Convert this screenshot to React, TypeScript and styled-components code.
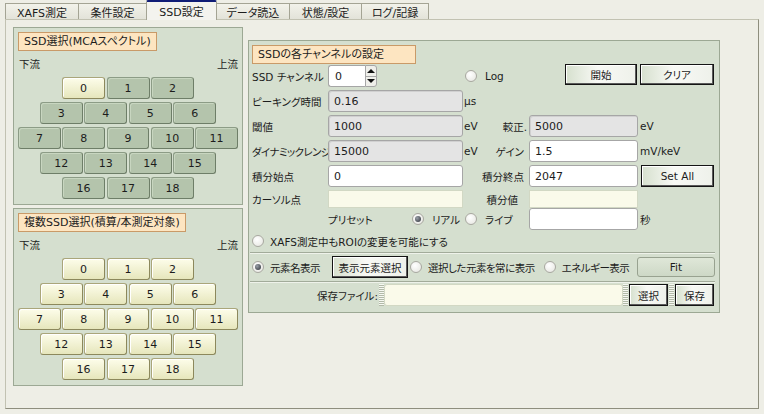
import React from "react";
import styled, { createGlobalStyle, css } from "styled-components";

const GlobalStyle = createGlobalStyle`
  html, body { margin: 0; padding: 0; background: #eeeee6; }
  body {
    font-family: "DejaVu Sans", "Noto Sans CJK JP", sans-serif;
    font-size: 10.5px;
    color: #1c1c1c;
    font-feature-settings: "palt";
  }
  * { box-sizing: border-box; }
`;

const Root = styled.div`
  width: 764px;
  height: 414px;
  overflow: hidden;
  background: #eeeee6;
`;

const TabBar = styled.div`
  display: flex;
  align-items: flex-end;
  height: 19px;
  padding-left: 5px;
  position: relative;
  z-index: 1;
`;

const Tab = styled.div<{ $active?: boolean; $w: number }>`
  width: ${(p) => p.$w}px;
  height: 16px;
  margin-right: -1px;
  display: flex;
  align-items: center;
  justify-content: center;
  border: 1px solid #a4a494;
  border-bottom: none;
  background: linear-gradient(#f2f2ea, #e3e3d9);
  white-space: nowrap;
  font-size: 11px;
  ${(p) =>
    p.$active &&
    css`
      height: 20px;
      margin-bottom: -1px;
      background: #f3f3ee;
      border-top: 2px solid #0f1c76;
      border-radius: 2px 2px 0 0;
      padding-bottom: 1px;
      position: relative;
      z-index: 2;
    `}
`;

const Pane = styled.div`
  margin-left: 5px;
  width: 754px;
  height: 390px;
  border: 1px solid;
  border-color: #c2c2b2 #8e8e7e #8e8e7e #c2c2b2;
  padding: 7px 0 0 7px;
  display: flex;
  align-items: flex-start;
  gap: 5px;
`;

const LeftColumn = styled.div`
  width: 230px;
  display: flex;
  flex-direction: column;
  gap: 3px;
`;

const GroupPanel = styled.div`
  height: 178px;
  border: 1px solid #9ca894;
  background: #d5dfcf;
  padding: 4px 4px 0 4px;
  display: flex;
  flex-direction: column;
`;

const GroupTitle = styled.div<{ $w?: number }>`
  align-self: flex-start;
  height: 19px;
  ${(p) => p.$w && `width: ${p.$w}px;`}
  padding: 0 5px;
  line-height: 17px;
  font-size: 11px;
  background: #fde5c1;
  border: 1px solid #c99a68;
  white-space: nowrap;
`;

const StreamRow = styled.div`
  display: flex;
  justify-content: space-between;
  height: 14px;
  line-height: 14px;
  margin-top: 6px;
  padding-left: 1px;
`;

const ChannelRows = styled.div`
  margin-top: 6px;
  display: flex;
  flex-direction: column;
  gap: 3px;
`;

const ChannelRow = styled.div`
  display: flex;
  justify-content: center;
  gap: 1.5px;
`;

const ChButton = styled.button<{ $on?: boolean }>`
  width: 43px;
  height: 22px;
  padding: 0;
  border-radius: 3px;
  font: inherit;
  font-size: 11px;
  color: #1c1c1c;
  border: 1px solid;
  ${(p) =>
    p.$on
      ? css`
          background: linear-gradient(#fdfdea, #e6e6bc);
          border-color: #aaa67a #8c885c #8c885c #aaa67a;
          box-shadow: inset 1px 1px 0 #ffffff;
        `
      : css`
          background: #b4c4ac;
          border-color: #8c9c86 #6e7e68 #6e7e68 #8c9c86;
          box-shadow: inset 1px 1px 0 #c8d6c0;
        `}
`;

const RightPanel = styled.div`
  width: 472px;
  height: 273px;
  margin-top: 13px;
  border: 1px solid #9ca894;
  background: #d5dfcf;
  padding: 4px 2px 0 3px;
  display: flex;
  flex-direction: column;
`;

const FormGrid = styled.div`
  display: grid;
  grid-template-columns: 76px 135px 65px 111px 76px;
  grid-template-rows: 25px 25px 25px 25px 25px 18px 23px;
  margin-top: 1px;
  align-items: start;
`;

const Label = styled.div<{ $h?: number; $tight?: boolean }>`
  height: ${(p) => p.$h ?? 22}px;
  display: flex;
  align-items: center;
  white-space: nowrap;
  ${(p) => p.$tight && "letter-spacing: -0.6px;"}
`;

const UnitCell = styled.div<{ $h?: number; $pr?: number }>`
  height: ${(p) => p.$h ?? 22}px;
  display: flex;
  align-items: center;
  justify-content: space-between;
  padding: 0 ${(p) => p.$pr ?? 4}px 0 1px;
  white-space: nowrap;
`;

const Field = styled.div<{ $kind: "gray" | "white" | "yellow"; $h?: number; $w?: number; $ml?: number }>`
  height: ${(p) => p.$h ?? 22}px;
  width: ${(p) => (p.$w ? `${p.$w}px` : "auto")};
  margin-left: ${(p) => p.$ml ?? 0}px;
  display: flex;
  align-items: center;
  padding-left: 5px;
  font-size: 11px;
  border: 1px solid #a6a6a6;
  border-radius: 3px;
  ${(p) =>
    p.$kind === "gray" &&
    css`
      background: #e4e4e4;
      box-shadow: inset 1px 1px 0 #d0d0d0;
    `}
  ${(p) =>
    p.$kind === "white" &&
    css`
      background: #ffffff;
    `}
  ${(p) =>
    p.$kind === "yellow" &&
    css`
      background: #fafaea;
      border-color: #d2d8c4;
      border-radius: 0;
    `}
`;

const SpinBox = styled.div`
  display: flex;
  width: 49px;
  height: 22px;
`;

const SpinText = styled.div`
  flex: 1;
  background: #ffffff;
  border: 1px solid #a6a6a6;
  border-right: none;
  border-radius: 3px 0 0 3px;
  padding-left: 6px;
  font-size: 11px;
  display: flex;
  align-items: center;
`;

const SpinArrows = styled.div`
  width: 12px;
  display: flex;
  flex-direction: column;
  border: 1px solid #a6a6a6;
  border-radius: 0 3px 3px 0;
  background: #efefea;
  overflow: hidden;
`;

const SpinHalf = styled.div<{ $down?: boolean }>`
  flex: 1;
  display: flex;
  align-items: center;
  justify-content: center;
  & + & {
    border-top: 1px solid #a6a6a6;
  }
  &::before {
    content: "";
    border-left: 4px solid transparent;
    border-right: 4px solid transparent;
    ${(p) => (p.$down ? "border-top: 4px solid #111;" : "border-bottom: 4px solid #111;")}
  }
`;

const RadioLabel = styled.label<{ $gap?: number; $ml?: number; $pl?: number; $tight?: boolean }>`
  display: inline-flex;
  align-items: center;
  gap: ${(p) => p.$gap ?? 6}px;
  margin-left: ${(p) => p.$ml ?? 0}px;
  padding-left: ${(p) => p.$pl ?? 0}px;
  height: 22px;
  white-space: nowrap;
  ${(p) => p.$tight && "letter-spacing: -0.5px;"}
`;

const RadioCircle = styled.span<{ $on?: boolean }>`
  flex: none;
  width: 12px;
  height: 12px;
  border-radius: 50%;
  border: 1px solid #a8a8a0;
  background: radial-gradient(circle at 40% 35%, #ffffff, #e4e4de);
  display: flex;
  align-items: center;
  justify-content: center;
  ${(p) =>
    p.$on &&
    css`
      &::after {
        content: "";
        width: 6px;
        height: 6px;
        border-radius: 50%;
        background: radial-gradient(circle at 35% 35%, #9aa0a8, #2a2e36);
      }
    `}
`;

const Radio = ({
  on,
  children,
  gap,
  ml,
  pl,
  tight,
}: {
  on?: boolean;
  children: React.ReactNode;
  gap?: number;
  ml?: number;
  pl?: number;
  tight?: boolean;
}) => (
  <RadioLabel $gap={gap} $ml={ml} $pl={pl} $tight={tight}>
    <RadioCircle $on={on} />
    <span>{children}</span>
  </RadioLabel>
);

const DarkButton = styled.button<{ $w: number; $h?: number; $ml?: number; $mt?: number; $self?: string }>`
  width: ${(p) => p.$w}px;
  height: ${(p) => p.$h ?? 22}px;
  margin-left: ${(p) => p.$ml ?? 0}px;
  margin-top: ${(p) => p.$mt ?? 0}px;
  ${(p) => p.$self && `justify-self: ${p.$self};`}
  padding: 0;
  font: inherit;
  color: #1c1c1c;
  white-space: nowrap;
  border: 1px solid #151515;
  border-radius: 0;
  background: linear-gradient(90deg, #d6e0ce, #f8f9f5 45%, #eef1ea);
  box-shadow: inset -1px -1px 0 #5a5a5a, inset 1px 1px 0 #ffffff;
`;

const FitButton = styled.button`
  width: 78px;
  height: 20px;
  margin-left: auto;
  margin-right: 2px;
  padding: 0;
  font: inherit;
  color: #1c1c1c;
  border: 1px solid #98a290;
  border-radius: 3px;
  background: linear-gradient(#dfe7d8, #cdd8c6);
`;

const PresetCell = styled.div`
  height: 22px;
  display: flex;
  align-items: center;
  justify-content: space-between;
  padding-right: 3px;
`;

const Empty = styled.span``;

const OptionRow = styled.div`
  display: flex;
  align-items: center;
  height: 18px;
  margin-top: 1px;
`;

const Separator = styled.div<{ $mt: number }>`
  margin: ${(p) => p.$mt}px 2px 0 -2px;
  border-top: 1px solid #a2ab9a;
  border-bottom: 1px solid #eef2ea;
`;

const ToolRow = styled.div<{ $mt: number }>`
  display: flex;
  align-items: center;
  height: 22px;
  margin-top: ${(p) => p.$mt}px;
`;

const SaveLabel = styled.div`
  width: 126px;
  display: flex;
  justify-content: flex-end;
  white-space: nowrap;
`;

const Grip = styled.div<{ $ml?: number }>`
  width: 5px;
  height: 22px;
  margin-left: ${(p) => p.$ml ?? 0}px;
  background: repeating-linear-gradient(#f6f8f2 0 1px, #b2baa8 1px 2px);
`;

const downRows = [[0, 1, 2], [3, 4, 5, 6], [7, 8, 9, 10, 11], [12, 13, 14, 15], [16, 17, 18]];

const ChannelGrid = ({ isOn }: { isOn: (n: number) => boolean }) => (
  <ChannelRows>
    {downRows.map((row, i) => (
      <ChannelRow key={i}>
        {row.map((n) => (
          <ChButton key={n} $on={isOn(n)}>
            {n}
          </ChButton>
        ))}
      </ChannelRow>
    ))}
  </ChannelRows>
);

const tabs: [string, number][] = [
  ["XAFS測定", 74],
  ["条件設定", 69],
  ["SSD設定", 71],
  ["データ読込", 74],
  ["状態/設定", 73],
  ["ログ/記録", 68],
];

export default function App() {
  return (
    <Root>
      <GlobalStyle />
      <TabBar>
        {tabs.map(([t, w]) => (
          <Tab key={t} $w={w} $active={t === "SSD設定"}>
            {t}
          </Tab>
        ))}
      </TabBar>
      <Pane>
        <LeftColumn>
          <GroupPanel>
            <GroupTitle>SSD選択(MCAスペクトル)</GroupTitle>
            <StreamRow>
              <span>下流</span>
              <span>上流</span>
            </StreamRow>
            <ChannelGrid isOn={(n) => n === 0} />
          </GroupPanel>
          <GroupPanel>
            <GroupTitle>複数SSD選択(積算/本測定対象)</GroupTitle>
            <StreamRow>
              <span>下流</span>
              <span>上流</span>
            </StreamRow>
            <ChannelGrid isOn={() => true} />
          </GroupPanel>
        </LeftColumn>

        <RightPanel>
          <GroupTitle $w={164}>SSDの各チャンネルの設定</GroupTitle>
          <FormGrid>
            <Label>SSD チャンネル</Label>
            <SpinBox>
              <SpinText>0</SpinText>
              <SpinArrows>
                <SpinHalf />
                <SpinHalf $down />
              </SpinArrows>
            </SpinBox>
            <Radio gap={8} pl={2}>Log</Radio>
            <DarkButton $w={72} $h={21} $mt={-1} $self="end" style={{ marginRight: 2 }}>
              開始
            </DarkButton>
            <DarkButton $w={74} $h={21} $mt={-1} $ml={1}>
              クリア
            </DarkButton>

            <Label>ピーキング時間</Label>
            <Field $kind="gray">0.16</Field>
            <UnitCell>µs</UnitCell>
            <Empty />
            <Empty />

            <Label>閾値</Label>
            <Field $kind="gray">1000</Field>
            <UnitCell $pr={1}>
              <span>eV</span>
              <span>較正.</span>
            </UnitCell>
            <Field $kind="gray" $w={109} $ml={1}>5000</Field>
            <UnitCell>eV</UnitCell>

            <Label $tight>ダイナミックレンジ</Label>
            <Field $kind="gray">15000</Field>
            <UnitCell>
              <span>eV</span>
              <span>ゲイン</span>
            </UnitCell>
            <Field $kind="white" $w={109} $ml={1}>1.5</Field>
            <UnitCell>mV/keV</UnitCell>

            <Label>積分始点</Label>
            <Field $kind="white">0</Field>
            <UnitCell>
              <span />
              <span>積分終点</span>
            </UnitCell>
            <Field $kind="white" $w={109} $ml={1}>2047</Field>
            <DarkButton $w={73} $ml={2}>
              Set All
            </DarkButton>

            <Label $h={18}>カーソル点</Label>
            <Field $kind="yellow" $h={18} />
            <UnitCell $h={18} $pr={10}>
              <span />
              <span>積分値</span>
            </UnitCell>
            <Field $kind="yellow" $h={18} $w={109} $ml={1} />
            <Empty />

            <Empty />
            <PresetCell>
              <span>プリセット</span>
              <Radio on gap={8}>リアル</Radio>
            </PresetCell>
            <Radio gap={8} pl={2}>ライブ</Radio>
            <Field $kind="white" $w={109} $ml={1} />
            <UnitCell>秒</UnitCell>
          </FormGrid>

          <OptionRow>
            <Radio>XAFS測定中もROIの変更を可能にする</Radio>
          </OptionRow>
          <Separator $mt={2} />
          <ToolRow $mt={2}>
            <Radio on tight>元素名表示</Radio>
            <DarkButton $w={76} $ml={12}>
              表示元素選択
            </DarkButton>
            <Radio ml={2} tight>選択した元素を常に表示</Radio>
            <Radio ml={9} tight>エネルギー表示</Radio>
            <FitButton>Fit</FitButton>
          </ToolRow>
          <Separator $mt={3} />
          <ToolRow $mt={1}>
            <SaveLabel>保存ファイル:</SaveLabel>
            <Grip $ml={1} />
            <Field $kind="yellow" $w={239} style={{ borderRadius: 3 }} />
            <Grip />
            <DarkButton $w={39} $ml={1}>
              選択
            </DarkButton>
            <Grip $ml={1} />
            <DarkButton $w={39} $ml={1}>
              保存
            </DarkButton>
          </ToolRow>
        </RightPanel>
      </Pane>
    </Root>
  );
}
